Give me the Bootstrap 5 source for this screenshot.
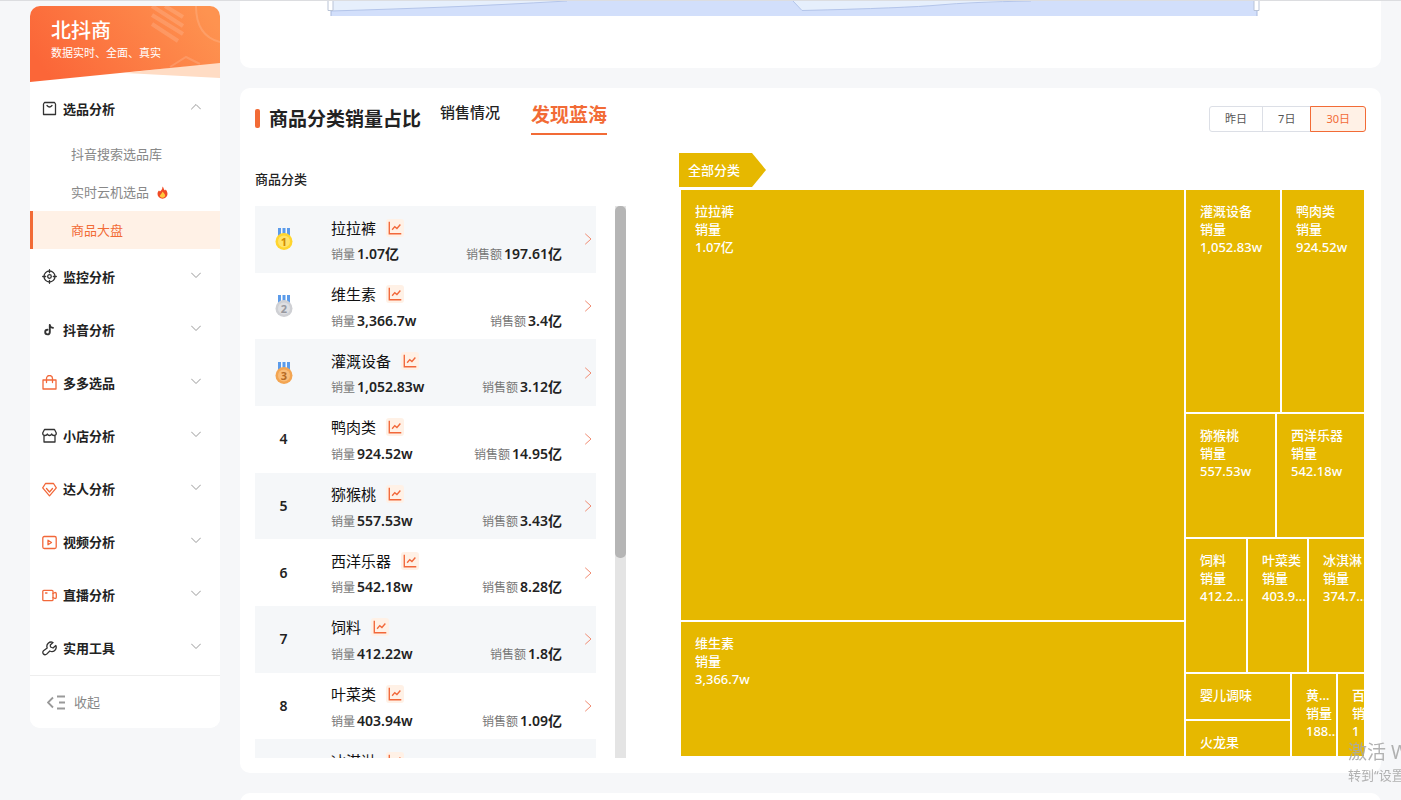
<!DOCTYPE html>
<html lang="zh-CN">
<head>
<meta charset="utf-8">
<meta name="viewport" content="width=device-width, initial-scale=1">
<title>商品大盘 - 北抖商</title>
<link href="https://cdn.jsdelivr.net/npm/bootstrap@5.3.0/dist/css/bootstrap.min.css" rel="stylesheet">
<style>
:root{--brand:#f26b36;--tint:#fff1e6;--gold:#e6b800;--pane:#f6f7f9}
html{scrollbar-width:none}
body{font-family:"Noto Sans","Noto Sans CJK SC",sans-serif;font-size:13px;line-height:18px;color:#222;background:var(--pane);border-top:1px solid #dcdde0;overflow-x:hidden}
a{text-decoration:none;color:inherit}
.shell{padding:0 20px 0 30px;gap:20px}
.side{width:190px;margin-top:5px;border-radius:10px;background:#fff;overflow:hidden}
.brand{height:76px;padding:14px 21px;color:#fff}
.brand svg{left:0;top:0;width:100%;height:100%}
.brand h1{font-size:20px;line-height:22px;font-weight:500;margin:0}
.brand p{font-size:11px;line-height:22px;margin:0}
.menu-row{height:53px;padding:0 19px 0 12px;font-weight:600;color:#222;background:none;border:0;width:100%}
.menu-row .ico{width:15px;height:15px;margin-right:6px}
.menu-row .chev{width:10px;height:10px;margin-left:auto;margin-bottom:4px;stroke:#999;stroke-width:1}
.menu-rest{height:426px;padding-top:1px;grid-template-rows:repeat(8,1fr)}
.menu-rest .menu-row{height:auto}
.sub-link{height:38px;padding-left:41px;color:#888}
.sub-link.on{color:var(--brand);background:var(--tint);border-left:3px solid var(--brand);padding-left:38px}
.fold{height:53px;border:0;border-top:1px solid #eee;background:#fff;padding-left:17px;color:#888}
.ico,.chev,.go{fill:none;stroke:#333;stroke-width:1.3;stroke-linecap:round;stroke-linejoin:round;flex:none}
.ico.hot{stroke:#f2683a}
.panel{background:#fff;border-radius:10px}
.top-panel{height:67px;border-radius:0 0 10px 10px;padding:0 120px 0 87px}
.next-panel{height:40px}
.cat-panel{padding:0 15px 15px}
.cat-head{height:65px;padding-bottom:4px}
.mark-bar{width:5px;height:19px;border-radius:2px;background:var(--brand);margin-right:9px}
.cat-head h2{font-size:19px;line-height:26px;font-weight:600;margin:0 19px 0 0}
.tabs{gap:31px;margin-top:-2px}
.tab-link{background:none;border:0;padding:0;font-size:15px;line-height:22px;font-weight:500;color:#222}
.tab-link:not(.on){padding-bottom:12px}
.tab-link.on{font-size:19px;line-height:26px;font-weight:700;color:var(--brand);border-bottom:2px solid var(--brand);padding-bottom:4px}
.range .btn{font-size:11px;line-height:16px;padding:4px 15px;border-color:#dcdfe6;color:#555;border-radius:3px}
.range .btn.active{background:var(--tint);border-color:var(--brand);color:var(--brand)}
.split{grid-template-columns:371fr 687fr;column-gap:53px}
.cat-title{font-size:13px;line-height:18px;font-weight:500;margin:17px 0 18px}
.viewport-box{height:552px;overflow:hidden}
.rank-list{height:600px;grid-template-rows:repeat(9,1fr);margin:0;padding:0;list-style:none}
.rank-list li:nth-child(odd){background:#f5f7f9}
.rank-no{width:57px;font-size:14px;font-weight:600}
.rank-no svg{width:20px;height:24px}
.info{padding:8px 22px 0 19px}
.info .line{height:27px}
.name{font-size:15px;color:#111}
.spark{width:18px;height:18px;border-radius:3px;background:var(--tint);border:0;padding:0;margin-left:10px}
.spark svg{width:16px;height:16px;display:block;margin:auto}
.lab{font-size:12px;color:#777;margin-right:2px}
.info b{font-size:14px;font-weight:600}
.go{width:8px;height:12px;stroke:#f08a70;stroke-width:1;margin-right:4px}
.track{width:11px;background:#e4e4e4;margin-left:19px}
.thumb{height:352px;border-radius:5px;background:#b5b5b5}
.crumb{width:87px;height:34px;padding-left:9px;line-height:34px;background:var(--gold);color:#fff;font-weight:500;clip-path:polygon(0 0,73px 0,100% 50%,73px 100%,0 100%)}
.treemap{margin:3px 2px 0 2px;height:566px;grid-template-columns:503fr 178fr;gap:2px;overflow:hidden;color:#fff;font-weight:500}
.treemap .cells{display:grid;gap:2px;min-width:0;min-height:0}
.tile{background:var(--gold);padding:12px 0 0 14px;white-space:nowrap;min-width:0;min-height:0}
.wm{right:0;bottom:15px;width:53px;color:#a9a9a9;overflow:hidden;white-space:nowrap;opacity:.9;pointer-events:none}
.wm .a{font-size:19px;line-height:26px}
.wm .b{font-size:13px;line-height:20px}
</style>
</head>
<body>
<svg width="0" height="0" class="position-absolute" aria-hidden="true">
<symbol id="dn" viewBox="0 0 10 10"><path d="M.5 3 5 7.500 9.500 3"/></symbol>
<symbol id="sp" viewBox="0 0 14 14"><path d="M2 1.500v10.500h10.500M4.500 8.500l2.300-2.700 1.900 1.600 3-3.400" fill="none" stroke="#f2683a" stroke-width="1.200"/></symbol>
<symbol id="rt" viewBox="0 0 8 12"><path d="M1.500 1 7 6l-5.500 5"/></symbol>
</svg>
<div class="shell d-flex align-items-start">
<aside class="side flex-shrink-0">
  <div class="brand position-relative">
    <svg class="position-absolute" viewBox="0 0 190 76" preserveAspectRatio="none" aria-hidden="true">
      <defs><linearGradient id="g" x1="0" x2="1" y1=".6" y2=".3"><stop offset="0" stop-color="#fb6638"/><stop offset="1" stop-color="#fe9350"/></linearGradient></defs>
      <path d="M95 67 190 56V72Z" fill="#ffdcc4"/>
      <path d="M0 0H190V57L0 76Z" fill="url(#g)"/>
      <g stroke="#fff" stroke-opacity=".14" fill="none"><path d="M122 0 153 20M135 0l18 11M122 9l31 19M122 18l26 17" stroke-width="4"/><path d="M166 0q0 30 24 36M140 61l16-10 14 7" stroke-width="2"/></g>
    </svg>
    <h1 class="position-relative">北抖商</h1>
    <p class="position-relative">数据实时、全面、真实</p>
  </div>
  <nav>
    <button class="menu-row d-flex align-items-center"><svg class="ico" viewBox="0 0 15 15"><path d="M2.500 1.500h10l1 1.500v10.500H1.500V3ZM5 4.500q2.500 3 5 0"/></svg>选品分析<svg class="chev" viewBox="0 0 10 10"><path d="M.5 7 5 2.500 9.500 7"/></svg></button>
    <a class="sub-link d-flex align-items-center" href="#">抖音搜索选品库</a>
    <a class="sub-link d-flex align-items-center" href="#">实时云机选品<svg class="ms-2" width="11" height="13" viewBox="0 0 11 13"><path d="M5.500.5C7 2 6.500 3.500 8 4.500l.8-1C10 5 10.500 6.500 10.500 8a5 4.700 0 0 1-10 0C.5 6.500 1 5.500 2 4.500l1 1C4.500 4 5.500 3 5.500.5Z" fill="#f04a24"/><path d="M5.500 5.500C8 8 8.500 9 8 10.500q-2.500 2.500-5 0C2.500 9 4.500 8.500 5.500 5.500Z" fill="#ffc83d"/></svg></a>
    <a class="sub-link on d-flex align-items-center" href="#">商品大盘</a>
    <div class="menu-rest d-grid">
      <button class="menu-row d-flex align-items-center"><svg class="ico" viewBox="0 0 15 15"><circle cx="7.500" cy="7.500" r="5.500"/><circle cx="7.500" cy="7.500" r="1.800"/><path d="M7.500.7v3M7.500 11.300v3M.7 7.500h3M11.300 7.500h3"/></svg>监控分析<svg class="chev"><use href="#dn"/></svg></button>
      <button class="menu-row d-flex align-items-center"><svg class="ico" viewBox="0 0 15 15"><path d="M7.800 3v7.200a2.300 2.300 0 1 1-2.300-2.400M7.800 3q.3 2.500 3.200 2.900" stroke-width="1.900"/></svg>抖音分析<svg class="chev"><use href="#dn"/></svg></button>
      <button class="menu-row d-flex align-items-center"><svg class="ico hot" viewBox="0 0 15 15"><path d="M1 5h13v9H1ZM4.500 7.500V3.500a3 3 0 0 1 6 0v4"/></svg>多多选品<svg class="chev"><use href="#dn"/></svg></button>
      <button class="menu-row d-flex align-items-center"><svg class="ico" viewBox="0 0 15 15"><path d="M2.500 1.500h10L14.300 5q0 2.500-2.200 2.500-2 0-2.400-1.500-.7 1.500-2.200 1.500T5.300 6Q4.900 7.500 2.900 7.500.7 7.500.7 5ZM2 8v6h11V8"/></svg>小店分析<svg class="chev"><use href="#dn"/></svg></button>
      <button class="menu-row d-flex align-items-center"><svg class="ico hot" viewBox="0 0 15 15"><path d="M3.500 1.500h8L14.300 5.800 7.500 13.800.7 5.800ZM4.500 6.500l3 3.500 3-3.500"/></svg>达人分析<svg class="chev"><use href="#dn"/></svg></button>
      <button class="menu-row d-flex align-items-center"><svg class="ico hot" viewBox="0 0 15 15"><rect x=".8" y="1.500" width="13.400" height="12" rx="1.500"/><path d="M6 5.200v4.600l3.500-2.300Z"/></svg>视频分析<svg class="chev"><use href="#dn"/></svg></button>
      <button class="menu-row d-flex align-items-center"><svg class="ico hot" viewBox="0 0 15 15"><rect x=".8" y="2.300" width="10.200" height="10.400" rx="1"/><path d="M11 5.500 13 4.500q1.300 0 1.300 1.200v3.600q0 1.200-1.300 1.200l-2-1M3.500 5h1.500"/></svg>直播分析<svg class="chev"><use href="#dn"/></svg></button>
      <button class="menu-row d-flex align-items-center"><svg class="ico" viewBox="0 0 15 15"><path d="M11 1.500A4.300 4.300 0 0 0 5.200 7L1.500 9.800a2.200 2.200 0 0 0 3.200 3.300L7.800 10A4.300 4.300 0 0 0 13.800 4.500L11 7 8.500 6 8.300 4Z"/></svg>实用工具<svg class="chev"><use href="#dn"/></svg></button>
    </div>
    <button class="fold w-100 d-flex align-items-center"><svg width="19" height="15" viewBox="0 0 19 15" fill="none" stroke="#999" stroke-width="1.800" class="me-2"><path d="M6 2.500 1 7.500l5 5M10 1.500h8M12 7.500h6M10 13.500h8"/></svg>收起</button>
  </nav>
</aside>
<main class="flex-grow-1 d-flex flex-column" style="gap:20px;min-width:0">
  <section class="panel top-panel">
    <svg class="d-block" width="100%" height="15" viewBox="0 0 934 15" preserveAspectRatio="none" role="img" aria-label="趋势缩放条">
      <path d="M4 0H930V15H4Z" fill="#d2dffb"/>
      <path d="M4 0H240Q170 4 120 6T4 10ZM466 0H704Q640 2 612 4T475 9.500Z" fill="#e6effc"/>
      <path d="M240 0Q170 4 120 6T4 10M466 0l9 9.500Q580 7 612 4T704 0" fill="none" stroke="#b4c5ea"/>
      <path d="M4 9v6M930 9v6" stroke="#a9b9dc"/>
      <path d="M1 -2H6V9.500H1ZM927-2h5V9.500h-5Z" fill="#fff" stroke="#b9c3d6"/>
    </svg>
  </section>
  <section class="panel cat-panel">
    <div class="cat-head d-flex align-items-center">
      <span class="mark-bar"></span><h2>商品分类销量占比</h2>
      <div class="tabs d-flex"><button class="tab-link">销售情况</button><button class="tab-link on">发现蓝海</button></div>
      <div class="range btn-group ms-auto" role="group" aria-label="时间范围"><button class="btn">昨日</button><button class="btn">7日</button><button class="btn active">30日</button></div>
    </div>
    <div class="split d-grid">
      <div>
        <h3 class="cat-title">商品分类</h3>
        <div class="viewport-box d-flex">
          <ol class="rank-list d-grid flex-grow-1" id="ranks"></ol>
          <div class="track"><div class="thumb"></div></div>
        </div>
      </div>
      <div>
        <div class="crumb">全部分类</div>
        <div class="treemap d-grid">
          <div class="cells" style="grid-template-rows:430fr 134fr">
            <div class="tile">拉拉裤<br>销量<br>1.07亿</div>
            <div class="tile">维生素<br>销量<br>3,366.7w</div>
          </div>
          <div class="cells" style="grid-template-rows:222fr 123fr 133fr 82fr">
            <div class="cells" style="grid-template-columns:94fr 82fr"><div class="tile">灌溉设备<br>销量<br>1,052.83w</div><div class="tile">鸭肉类<br>销量<br>924.52w</div></div>
            <div class="cells" style="grid-template-columns:89fr 87fr"><div class="tile">猕猴桃<br>销量<br>557.53w</div><div class="tile">西洋乐器<br>销量<br>542.18w</div></div>
            <div class="cells" style="grid-template-columns:60fr 59fr 55fr"><div class="tile">饲料<br>销量<br>412.2...</div><div class="tile">叶菜类<br>销量<br>403.9...</div><div class="tile">冰淇淋<br>销量<br>374.7...</div></div>
            <div class="cells" style="grid-template-columns:104fr 44fr 26fr">
              <div class="cells" style="grid-template-rows:45fr 35fr"><div class="tile">婴儿调味</div><div class="tile">火龙果</div></div>
              <div class="tile">黄...<br>销量<br>188...</div><div class="tile">百<br>销<br>1</div>
            </div>
          </div>
        </div>
      </div>
    </div>
  </section>
  <section class="panel next-panel"></section>
</main>
</div>
<div class="wm position-fixed"><div class="a">激活 W</div><div class="b">转到“设置</div></div>
<script>
const rows=[["拉拉裤","1.07亿","197.61亿"],["维生素","3,366.7w","3.4亿"],["灌溉设备","1,052.83w","3.12亿"],["鸭肉类","924.52w","14.95亿"],["猕猴桃","557.53w","3.43亿"],["西洋乐器","542.18w","8.28亿"],["饲料","412.22w","1.8亿"],["叶菜类","403.94w","1.09亿"],["冰淇淋"]];
const metal=[["#ffd52e","#ffe36b","#d08a00"],["#cfd0d4","#dedfe2","#98999f"],["#f3a552","#f9bd79","#b56a24"]];
const medal=i=>{const[a,b,c]=metal[i];return `<svg viewBox="0 0 20 24"><path d="M4 1h3v8H4ZM8.500 1h3v8h-3ZM13 1h3v8h-3Z" fill="#5b9bea"/><circle cx="10" cy="14.500" r="8.500" fill="${a}"/><circle cx="10" cy="14.500" r="6" fill="${b}"/><text x="10" y="18.500" font-size="11" font-weight="700" text-anchor="middle" fill="${c}">${i+1}</text></svg>`};
const figures=r=>r[1]?`<div class="line d-flex align-items-center justify-content-between"><span><span class="lab">销量</span><b>${r[1]}</b></span><span><span class="lab">销售额</span><b>${r[2]}</b></span></div>`:"";
document.getElementById("ranks").innerHTML=rows.map((r,i)=>`<li class="d-flex align-items-center"><div class="rank-no d-flex justify-content-center flex-shrink-0">${i<3?medal(i):r[1]?i+1:""}</div><div class="info flex-grow-1 align-self-start"><div class="line d-flex align-items-center"><span class="name">${r[0]}</span><button class="spark" aria-label="趋势"><svg><use href="#sp"/></svg></button></div>${figures(r)}</div><svg class="go"><use href="#rt"/></svg></li>`).join("");
</script>
<script src="https://cdn.jsdelivr.net/npm/bootstrap@5.3.0/dist/js/bootstrap.bundle.min.js"></script>
</body>
</html>
